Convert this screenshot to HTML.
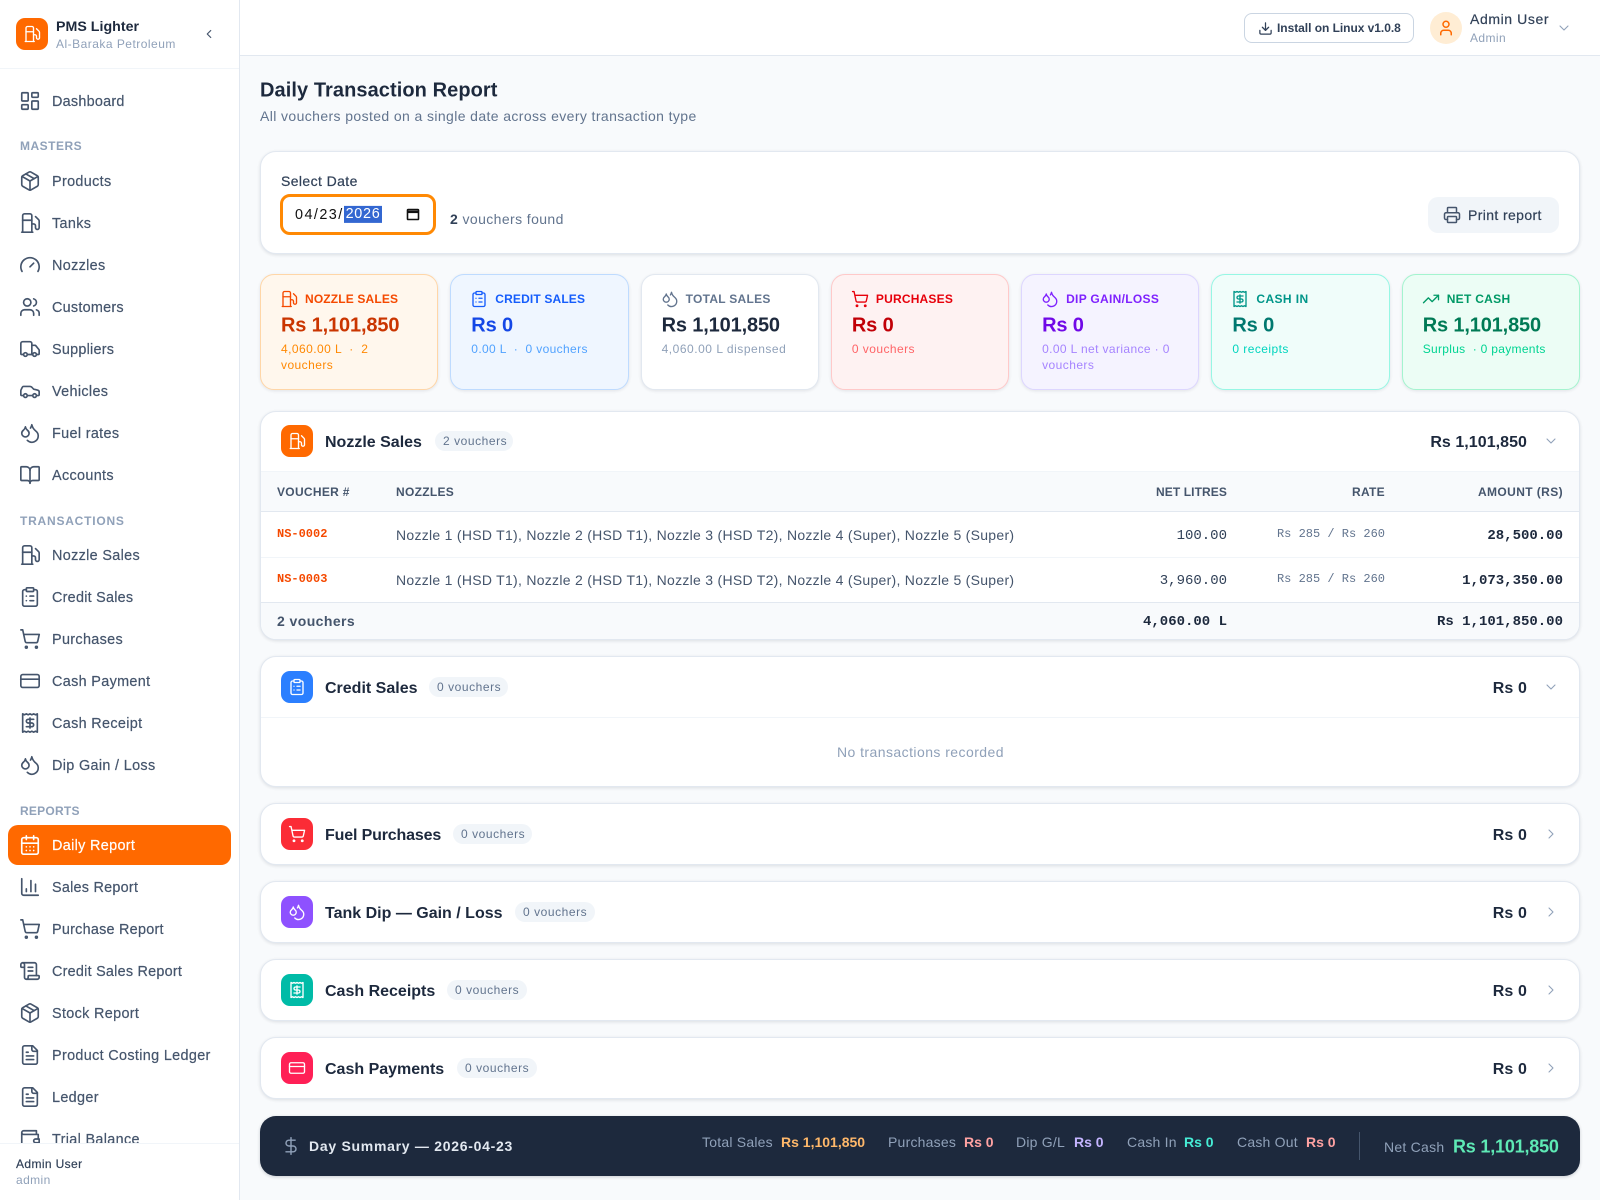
<!DOCTYPE html>
<html lang="en"><head><meta charset="utf-8"><title>Daily Transaction Report</title>
<style>
html,body{margin:0;padding:0}
body{position:relative;width:1600px;height:1200px;overflow:hidden;background:#f8fafc;font-family:"Liberation Sans",sans-serif;font-size:14px;letter-spacing:.34px;color:#1d293d}
.t{position:absolute;white-space:nowrap;transform:translateY(calc(-50% + 1.4px));line-height:1.2}
.i{position:absolute;fill:none;stroke:currentColor;stroke-width:2;stroke-linecap:round;stroke-linejoin:round;overflow:visible}
.box{position:absolute;box-sizing:border-box}
.card{position:absolute;box-sizing:border-box;left:260px;width:1320px;background:#fff;border:1px solid #e2e8f0;border-radius:16px;box-shadow:0 1px 3px rgba(15,23,43,.12)}
.m{font-family:"Liberation Mono",monospace;letter-spacing:0}
.md{-webkit-text-stroke:.2px}
.n{left:52px;color:#45556c;font-weight:400;font-size:14.4px;-webkit-text-stroke:.2px}
.ni{left:19px;width:22px;height:22px;margin-top:-2px;color:#45556c;stroke-width:1.8}
.g{left:20px;color:#90a1b9;font-size:12px;font-weight:700}
.st{position:absolute;box-sizing:border-box;top:274px;width:178.3px;height:116px;border:1px solid;border-radius:14px;box-shadow:0 1px 3px rgba(15,23,43,.1)}
.sl{left:44px;top:22.6px;font-size:12px;font-weight:700;letter-spacing:.3px}
.sv{left:20px;top:48.6px;font-size:20px;font-weight:700;letter-spacing:-.15px}
.ss{left:20px;top:72.6px;font-size:12px;letter-spacing:.44px}
.si{left:19px;top:15px;width:18px;height:18px;stroke-width:1.8}
.hi{position:absolute;left:281px;width:32px;height:32px;border-radius:9px;color:#fff}
.hi svg{left:7px;top:7px;width:18px;height:18px;stroke-width:1.8}
.ht{left:325px;font-size:16px;font-weight:700;color:#1d293d;letter-spacing:0}
.pill{position:absolute;box-sizing:border-box;height:20px;border-radius:10px;background:#f1f5f9;color:#62748e;font-size:12px;line-height:20px;padding:0 8px;white-space:nowrap;letter-spacing:.55px}
.tot{right:73px;font-size:16px;font-weight:700;color:#1d293d;letter-spacing:.12px}
.chev{left:1543px;width:16px;height:16px;color:#90a1b9;stroke-width:1.6}
.th{font-size:12px;font-weight:700;color:#45556c;top:491px;letter-spacing:.3px}
.ln{position:absolute;left:261px;width:1318px;height:1px}
.nz{left:396px;color:#45556c;font-size:14px;letter-spacing:.28px}
.sm{top:1140.5px;font-size:14px;color:#90a1b9;letter-spacing:.22px}
.sb{top:1140.5px;font-size:14px;font-weight:700;letter-spacing:0}
</style></head><body>
<svg width="0" height="0" style="position:absolute"><defs>
<symbol id="fuel" viewBox="0 0 24 24"><line x1="3" x2="15" y1="22" y2="22"/><line x1="4" x2="14" y1="9" y2="9"/><path d="M14 22V4a2 2 0 0 0-2-2H6a2 2 0 0 0-2 2v18"/><path d="M14 13h2a2 2 0 0 1 2 2v2a2 2 0 0 0 2 2a2 2 0 0 0 2-2V9.83a2 2 0 0 0-.59-1.42L18 5"/></symbol>
<symbol id="dash" viewBox="0 0 24 24"><rect width="7" height="9" x="3" y="3" rx="1"/><rect width="7" height="5" x="14" y="3" rx="1"/><rect width="7" height="9" x="14" y="12" rx="1"/><rect width="7" height="5" x="3" y="16" rx="1"/></symbol>
<symbol id="pkg" viewBox="0 0 24 24"><path d="m7.5 4.27 9 5.15"/><path d="M21 8a2 2 0 0 0-1-1.73l-7-4a2 2 0 0 0-2 0l-7 4A2 2 0 0 0 3 8v8a2 2 0 0 0 1 1.73l7 4a2 2 0 0 0 2 0l7-4A2 2 0 0 0 21 16Z"/><path d="m3.3 7 8.7 5 8.7-5"/><path d="M12 22V12"/></symbol>
<symbol id="gauge" viewBox="0 0 24 24"><path d="m12 14 4-4"/><path d="M3.34 19a10 10 0 1 1 17.32 0"/></symbol>
<symbol id="users" viewBox="0 0 24 24"><path d="M16 21v-2a4 4 0 0 0-4-4H6a4 4 0 0 0-4 4v2"/><circle cx="9" cy="7" r="4"/><path d="M22 21v-2a4 4 0 0 0-3-3.87"/><path d="M16 3.13a4 4 0 0 1 0 7.75"/></symbol>
<symbol id="truck" viewBox="0 0 24 24"><path d="M14 18V6a2 2 0 0 0-2-2H4a2 2 0 0 0-2 2v11a1 1 0 0 0 1 1h2"/><path d="M15 18H9"/><path d="M19 18h2a1 1 0 0 0 1-1v-3.65a1 1 0 0 0-.22-.624l-3.48-4.35A1 1 0 0 0 17.52 8H14"/><circle cx="17" cy="18" r="2"/><circle cx="7" cy="18" r="2"/></symbol>
<symbol id="car" viewBox="0 0 24 24"><path d="M19 17h2c.6 0 1-.4 1-1v-3c0-.9-.7-1.7-1.5-1.9C18.7 10.6 16 10 16 10s-1.3-1.4-2.2-2.3c-.5-.4-1.1-.7-1.8-.7H5c-.6 0-1.1.4-1.4.9l-1.4 2.9A3.7 3.7 0 0 0 2 12v4c0 .6.4 1 1 1h2"/><circle cx="7" cy="17" r="2"/><path d="M9 17h6"/><circle cx="17" cy="17" r="2"/></symbol>
<symbol id="drops" viewBox="0 0 24 24"><path d="M7 16.3c2.2 0 4-1.83 4-4.05 0-1.16-.57-2.26-1.71-3.19S7.29 6.75 7 5.3c-.29 1.45-1.14 2.84-2.29 3.76S3 11.1 3 12.25c0 2.22 1.8 4.05 4 4.05z"/><path d="M12.56 6.6A10.97 10.97 0 0 0 14 3.02c.5 2.5 2 4.9 4 6.5s3 3.5 3 5.5a6.98 6.98 0 0 1-11.91 4.97"/></symbol>
<symbol id="book" viewBox="0 0 24 24"><path d="M12 7v14"/><path d="M3 18a1 1 0 0 1-1-1V4a1 1 0 0 1 1-1h5a4 4 0 0 1 4 4 4 4 0 0 1 4-4h5a1 1 0 0 1 1 1v13a1 1 0 0 1-1 1h-6a3 3 0 0 0-3 3 3 3 0 0 0-3-3z"/></symbol>
<symbol id="clip" viewBox="0 0 24 24"><rect width="8" height="4" x="8" y="2" rx="1" ry="1"/><path d="M16 4h2a2 2 0 0 1 2 2v14a2 2 0 0 1-2 2H6a2 2 0 0 1-2-2V6a2 2 0 0 1 2-2h2"/><path d="M12 11h4"/><path d="M12 16h4"/><path d="M8 11h.01"/><path d="M8 16h.01"/></symbol>
<symbol id="cart" viewBox="0 0 24 24"><circle cx="8" cy="21" r="1"/><circle cx="19" cy="21" r="1"/><path d="M2.05 2.05h2l2.66 12.42a2 2 0 0 0 2 1.58h9.78a2 2 0 0 0 1.95-1.57l1.65-7.43H5.12"/></symbol>
<symbol id="cc" viewBox="0 0 24 24"><rect width="20" height="14" x="2" y="5" rx="2"/><line x1="2" x2="22" y1="10" y2="10"/></symbol>
<symbol id="rcpt" viewBox="0 0 24 24"><path d="M4 2v20l2-1 2 1 2-1 2 1 2-1 2 1 2-1 2 1V2l-2 1-2-1-2 1-2-1-2 1-2-1-2 1Z"/><path d="M16 8h-6a2 2 0 1 0 0 4h4a2 2 0 1 1 0 4H8"/><path d="M12 17.5v-11"/></symbol>
<symbol id="cal" viewBox="0 0 24 24"><path d="M8 2v4"/><path d="M16 2v4"/><rect width="18" height="18" x="3" y="4" rx="2"/><path d="M3 10h18"/><path d="M8 14h.01"/><path d="M12 14h.01"/><path d="M16 14h.01"/><path d="M8 18h.01"/><path d="M12 18h.01"/><path d="M16 18h.01"/></symbol>
<symbol id="chart" viewBox="0 0 24 24"><path d="M3 3v16a2 2 0 0 0 2 2h16"/><path d="M18 17V9"/><path d="M13 17V5"/><path d="M8 17v-3"/></symbol>
<symbol id="scroll" viewBox="0 0 24 24"><path d="M15 12h-5"/><path d="M15 8h-5"/><path d="M19 17V5a2 2 0 0 0-2-2H4"/><path d="M8 21h12a2 2 0 0 0 2-2v-1a1 1 0 0 0-1-1H11a1 1 0 0 0-1 1v1a2 2 0 1 1-4 0V5a2 2 0 1 0-4 0v2a1 1 0 0 0 1 1h3"/></symbol>
<symbol id="file" viewBox="0 0 24 24"><path d="M15 2H6a2 2 0 0 0-2 2v16a2 2 0 0 0 2 2h12a2 2 0 0 0 2-2V7Z"/><path d="M14 2v4a2 2 0 0 0 2 2h4"/><path d="M10 9H8"/><path d="M16 13H8"/><path d="M16 17H8"/></symbol>
<symbol id="wallet" viewBox="0 0 24 24"><path d="M21 12V7H5a2 2 0 0 1 0-4h14v4"/><path d="M3 5v14a2 2 0 0 0 2 2h16v-5"/><path d="M18 12a2 2 0 0 0 0 4h4v-4Z"/></symbol>
<symbol id="dl" viewBox="0 0 24 24"><path d="M21 15v4a2 2 0 0 1-2 2H5a2 2 0 0 1-2-2v-4"/><polyline points="7 10 12 15 17 10"/><line x1="12" x2="12" y1="15" y2="3"/></symbol>
<symbol id="user" viewBox="0 0 24 24"><path d="M19 21v-2a4 4 0 0 0-4-4H9a4 4 0 0 0-4 4v2"/><circle cx="12" cy="7" r="4"/></symbol>
<symbol id="print" viewBox="0 0 24 24"><path d="M6 18H4a2 2 0 0 1-2-2v-5a2 2 0 0 1 2-2h16a2 2 0 0 1 2 2v5a2 2 0 0 1-2 2h-2"/><path d="M6 9V3a1 1 0 0 1 1-1h10a1 1 0 0 1 1 1v6"/><rect x="6" y="14" width="12" height="8" rx="1"/></symbol>
<symbol id="trend" viewBox="0 0 24 24"><polyline points="22 7 13.5 15.5 8.5 10.5 2 17"/><polyline points="16 7 22 7 22 13"/></symbol>
<symbol id="dollar" viewBox="0 0 24 24"><line x1="12" x2="12" y1="2" y2="22"/><path d="M17 5H9.5a3.5 3.5 0 0 0 0 7h5a3.5 3.5 0 0 1 0 7H6"/></symbol>
<symbol id="cd" viewBox="0 0 24 24"><path d="m6 9 6 6 6-6"/></symbol>
<symbol id="cr" viewBox="0 0 24 24"><path d="m9 18 6-6-6-6"/></symbol>
<symbol id="cl" viewBox="0 0 24 24"><path d="m15 18-6-6 6-6"/></symbol>
</defs></svg>

<!-- Sidebar -->
<div class="box" style="left:0;top:0;width:240px;height:1200px;background:#fff;border-right:1px solid #e2e8f0;overflow:hidden">
 <div class="box" style="left:16px;top:18px;width:32px;height:32px;border-radius:9px;background:#ff6900;color:#fff"><svg class="i" style="left:7px;top:7px;width:18px;height:18px;stroke-width:1.8"><use href="#fuel"/></svg></div>
 <span class="t" style="left:56px;top:26.2px;font-weight:700;font-size:14.2px;color:#1d293d;letter-spacing:.03px">PMS Lighter</span>
 <span class="t" style="left:56px;top:42.6px;font-size:12px;color:#90a1b9;letter-spacing:.48px">Al-Baraka Petroleum</span>
 <svg class="i" style="left:202px;top:27px;width:14px;height:14px;color:#45556c"><use href="#cl"/></svg>
 <div class="box" style="left:0;top:68px;width:239px;height:1px;background:#f1f5f9"></div>
 <div class="box" style="left:0;top:0;width:239px;height:1143px;overflow:hidden">
 <svg class="i ni" style="top:92px"><use href="#dash"/></svg><span class="t n" style="top:101px;letter-spacing:.25px">Dashboard</span>
 <span class="t g" style="top:145.4px;letter-spacing:.5px">MASTERS</span>
 <svg class="i ni" style="top:172px"><use href="#pkg"/></svg><span class="t n" style="top:181px">Products</span>
 <svg class="i ni" style="top:214px"><use href="#fuel"/></svg><span class="t n" style="top:223px">Tanks</span>
 <svg class="i ni" style="top:256px"><use href="#gauge"/></svg><span class="t n" style="top:265px">Nozzles</span>
 <svg class="i ni" style="top:298px"><use href="#users"/></svg><span class="t n" style="top:307px;letter-spacing:.25px">Customers</span>
 <svg class="i ni" style="top:340px"><use href="#truck"/></svg><span class="t n" style="top:349px;letter-spacing:.25px">Suppliers</span>
 <svg class="i ni" style="top:382px"><use href="#car"/></svg><span class="t n" style="top:391px">Vehicles</span>
 <svg class="i ni" style="top:424px"><use href="#drops"/></svg><span class="t n" style="top:433px">Fuel rates</span>
 <svg class="i ni" style="top:466px"><use href="#book"/></svg><span class="t n" style="top:475px">Accounts</span>
 <span class="t g" style="top:519.7px;letter-spacing:.78px">TRANSACTIONS</span>
 <svg class="i ni" style="top:546px"><use href="#fuel"/></svg><span class="t n" style="top:555px">Nozzle Sales</span>
 <svg class="i ni" style="top:588px"><use href="#clip"/></svg><span class="t n" style="top:597px;letter-spacing:.25px">Credit Sales</span>
 <svg class="i ni" style="top:630px"><use href="#cart"/></svg><span class="t n" style="top:639px">Purchases</span>
 <svg class="i ni" style="top:672px"><use href="#cc"/></svg><span class="t n" style="top:681px">Cash Payment</span>
 <svg class="i ni" style="top:714px"><use href="#rcpt"/></svg><span class="t n" style="top:723px">Cash Receipt</span>
 <svg class="i ni" style="top:756px"><use href="#drops"/></svg><span class="t n" style="top:765px">Dip Gain / Loss</span>
 <span class="t g" style="top:809.7px;letter-spacing:.25px">REPORTS</span>
 <div class="box" style="left:8px;top:825px;width:223px;height:40px;border-radius:10px;background:#ff6900"></div>
 <svg class="i ni" style="top:836px;color:#fff"><use href="#cal"/></svg><span class="t n" style="top:845px;color:#fff">Daily Report</span>
 <svg class="i ni" style="top:878px"><use href="#chart"/></svg><span class="t n" style="top:887px;letter-spacing:.25px">Sales Report</span>
 <svg class="i ni" style="top:920px"><use href="#cart"/></svg><span class="t n" style="top:929px;letter-spacing:.25px">Purchase Report</span>
 <svg class="i ni" style="top:962px"><use href="#scroll"/></svg><span class="t n" style="top:971px;letter-spacing:.24px">Credit Sales Report</span>
 <svg class="i ni" style="top:1004px"><use href="#pkg"/></svg><span class="t n" style="top:1013px">Stock Report</span>
 <svg class="i ni" style="top:1046px"><use href="#file"/></svg><span class="t n" style="top:1055px">Product Costing Ledger</span>
 <svg class="i ni" style="top:1088px"><use href="#file"/></svg><span class="t n" style="top:1097px">Ledger</span>
 <svg class="i ni" style="top:1130px"><use href="#wallet"/></svg><span class="t n" style="top:1139px">Trial Balance</span>
 </div>
 <div class="box" style="left:0;top:1143px;width:239px;height:1px;background:#f1f5f9"></div>
 <span class="t md" style="left:16px;top:1163px;font-size:12px;color:#314158;letter-spacing:.38px">Admin User</span>
 <span class="t" style="left:16px;top:1179px;font-size:12px;color:#90a1b9;letter-spacing:.4px">admin</span>
</div>

<!-- Top bar -->
<div class="box" style="left:240px;top:0;width:1360px;height:56px;background:#fff;border-bottom:1px solid #e2e8f0"></div>
<div class="box" style="left:1244px;top:13px;width:170px;height:30px;border:1px solid #cad5e2;border-radius:8px;background:#fff"></div>
<svg class="i" style="left:1257.5px;top:20.5px;width:15px;height:15px;color:#314158"><use href="#dl"/></svg>
<span class="t" style="left:1277px;top:27px;font-size:12px;font-weight:700;color:#314158;letter-spacing:-.04px">Install on Linux v1.0.8</span>
<div class="box" style="left:1430px;top:12px;width:32px;height:32px;border-radius:50%;background:#ffedd4;color:#ff6900"><svg class="i" style="left:7px;top:7px;width:18px;height:18px"><use href="#user"/></svg></div>
<span class="t md" style="left:1470px;top:18.2px;font-size:14px;color:#314158;letter-spacing:.6px">Admin User</span>
<span class="t" style="left:1470px;top:36.7px;font-size:12px;color:#90a1b9;letter-spacing:.4px">Admin</span>
<svg class="i" style="left:1556px;top:20px;width:16px;height:16px;color:#90a1b9;stroke-width:1.6"><use href="#cd"/></svg>

<!-- Title -->
<span class="t" style="left:260px;top:88.8px;font-size:20px;font-weight:700;color:#1d293d;letter-spacing:.08px">Daily Transaction Report</span>
<span class="t" style="left:260px;top:115.4px;font-size:14px;color:#62748e;letter-spacing:.39px">All vouchers posted on a single date across every transaction type</span>

<!-- Filter card -->
<div class="card" style="top:151px;height:103px"></div>
<span class="t md" style="left:281px;top:180.4px;font-size:14px;color:#314158;letter-spacing:.4px">Select Date</span>
<div class="box" style="left:279.5px;top:193.5px;width:156px;height:41px;border:3px solid #ff8904;border-radius:10px;background:#fff"></div>
<span class="t" style="left:295px;top:213.6px;font-size:14.4px;color:#111;letter-spacing:1.45px">04/23/</span>
<span class="t" style="left:344px;top:212.7px;width:38px;height:17px;line-height:17px;background:#3367d1;color:#fff;font-size:14.4px;letter-spacing:.7px;text-align:center">2026</span>
<svg class="i" style="left:406px;top:207px;width:14px;height:14px;color:#111;stroke-width:1.6;stroke-linecap:butt;stroke-linejoin:miter" viewBox="0 0 14 14"><rect x="1.5" y="2.5" width="11" height="10" rx=".8"/><path d="M1.5 4.8h11" stroke-width="2.6"/></svg>
<span class="t" style="left:450px;top:217.6px;font-size:14px;color:#62748e;letter-spacing:.4px"><b style="color:#314158">2</b> vouchers found</span>
<div class="box" style="left:1428px;top:197px;width:131px;height:36px;border-radius:10px;background:#f1f5f9"></div>
<svg class="i" style="left:1443px;top:206px;width:18px;height:18px;color:#45556c"><use href="#print"/></svg>
<span class="t md" style="left:1468px;top:213.6px;font-size:14px;color:#314158;letter-spacing:.38px">Print report</span>

<!-- Stat cards -->
<div class="st" style="left:260px;background:#fff7ed;border-color:#ffd6a7">
 <svg class="i si" style="color:#f54900"><use href="#fuel"/></svg><span class="t sl" style="color:#f54900;letter-spacing:.15px">NOZZLE SALES</span>
 <span class="t sv" style="color:#ca3500">Rs 1,101,850</span>
 <span class="t ss" style="color:#ff8904">4,060.00 L &nbsp;·&nbsp; 2</span><span class="t ss" style="top:88.6px;color:#ff8904">vouchers</span>
</div>
<div class="st" style="left:450.3px;background:#eff6ff;border-color:#bedbff">
 <svg class="i si" style="color:#155dfc"><use href="#clip"/></svg><span class="t sl" style="color:#155dfc;letter-spacing:.15px">CREDIT SALES</span>
 <span class="t sv" style="color:#1447e6">Rs 0</span>
 <span class="t ss" style="color:#51a2ff;letter-spacing:.36px">0.00 L &nbsp;·&nbsp; 0 vouchers</span>
</div>
<div class="st" style="left:640.6px;background:#fff;border-color:#e2e8f0">
 <svg class="i si" style="color:#62748e"><use href="#drops"/></svg><span class="t sl" style="color:#62748e;letter-spacing:.28px">TOTAL SALES</span>
 <span class="t sv" style="color:#1d293d">Rs 1,101,850</span>
 <span class="t ss" style="color:#90a1b9;letter-spacing:.52px">4,060.00 L dispensed</span>
</div>
<div class="st" style="left:830.9px;background:#fef2f2;border-color:#ffc9c9">
 <svg class="i si" style="color:#e7000b"><use href="#cart"/></svg><span class="t sl" style="color:#e7000b;letter-spacing:.2px">PURCHASES</span>
 <span class="t sv" style="color:#c10007">Rs 0</span>
 <span class="t ss" style="color:#ff6467">0 vouchers</span>
</div>
<div class="st" style="left:1021.1px;background:#f5f3ff;border-color:#ddd6ff">
 <svg class="i si" style="color:#7f22fe"><use href="#drops"/></svg><span class="t sl" style="color:#7f22fe">DIP GAIN/LOSS</span>
 <span class="t sv" style="color:#7008e7">Rs 0</span>
 <span class="t ss" style="color:#a684ff;letter-spacing:.38px">0.00 L net variance · 0</span><span class="t ss" style="top:88.6px;color:#a684ff">vouchers</span>
</div>
<div class="st" style="left:1211.4px;background:#f0fdfa;border-color:#96f7e4">
 <svg class="i si" style="color:#009689"><use href="#rcpt"/></svg><span class="t sl" style="color:#009689;letter-spacing:.4px">CASH IN</span>
 <span class="t sv" style="color:#00786f">Rs 0</span>
 <span class="t ss" style="color:#00d5be">0 receipts</span>
</div>
<div class="st" style="left:1401.7px;background:#ecfdf5;border-color:#a4f4cf">
 <svg class="i si" style="color:#009966"><use href="#trend"/></svg><span class="t sl" style="color:#009966">NET CASH</span>
 <span class="t sv" style="color:#007a55">Rs 1,101,850</span>
 <span class="t ss" style="color:#00d492;letter-spacing:.3px">Surplus &nbsp;· 0 payments</span>
</div>

<!-- Nozzle Sales -->
<div class="card" style="top:411px;height:229px"></div>
<div class="hi" style="top:425px;background:#ff6900"><svg class="i"><use href="#fuel"/></svg></div>
<span class="t ht" style="top:441px">Nozzle Sales</span>
<div class="pill" style="left:435px;top:431px;width:78px">2 vouchers</div>
<span class="t tot" style="top:441px;letter-spacing:.05px">Rs 1,101,850</span>
<svg class="i chev" style="top:433px"><use href="#cd"/></svg>
<div class="box" style="left:261px;top:471px;width:1318px;height:41px;background:#f8fafc;border-top:1px solid #f1f5f9;border-bottom:1px solid #e2e8f0"></div>
<span class="t th" style="left:277px">VOUCHER #</span>
<span class="t th" style="left:396px">NOZZLES</span>
<span class="t th" style="right:373px;letter-spacing:.1px">NET LITRES</span>
<span class="t th" style="right:215px">RATE</span>
<span class="t th" style="right:37px;letter-spacing:.4px">AMOUNT (RS)</span>
<span class="t m" style="left:277px;top:533.4px;font-size:12px;font-weight:700;color:#f54900">NS-0002</span>
<span class="t nz" style="top:534px">Nozzle 1 (HSD T1), Nozzle 2 (HSD T1), Nozzle 3 (HSD T2), Nozzle 4 (Super), Nozzle 5 (Super)</span>
<span class="t m" style="right:373px;top:534.6px;color:#314158">100.00</span>
<span class="t m" style="right:215px;top:533.4px;font-size:12px;color:#62748e">Rs 285 / Rs 260</span>
<span class="t m" style="right:37px;top:534.6px;font-weight:700;color:#1d293d">28,500.00</span>
<div class="ln" style="top:557px;background:#f1f5f9"></div>
<span class="t m" style="left:277px;top:578.4px;font-size:12px;font-weight:700;color:#f54900">NS-0003</span>
<span class="t nz" style="top:579px">Nozzle 1 (HSD T1), Nozzle 2 (HSD T1), Nozzle 3 (HSD T2), Nozzle 4 (Super), Nozzle 5 (Super)</span>
<span class="t m" style="right:373px;top:579.6px;color:#314158">3,960.00</span>
<span class="t m" style="right:215px;top:578.4px;font-size:12px;color:#62748e">Rs 285 / Rs 260</span>
<span class="t m" style="right:37px;top:579.6px;font-weight:700;color:#1d293d">1,073,350.00</span>
<div class="box" style="left:261px;top:602px;width:1318px;height:37px;background:#f8fafc;border-top:1px solid #e2e8f0;border-radius:0 0 15px 15px"></div>
<span class="t" style="left:277px;top:620px;font-weight:700;color:#45556c;letter-spacing:.42px">2 vouchers</span>
<span class="t m" style="right:373px;top:621px;font-weight:700;color:#1d293d">4,060.00 L</span>
<span class="t m" style="right:37px;top:621px;font-weight:700;color:#1d293d">Rs 1,101,850.00</span>

<!-- Credit Sales -->
<div class="card" style="top:656px;height:131px"></div>
<div class="hi" style="top:671px;background:#2b7fff"><svg class="i"><use href="#clip"/></svg></div>
<span class="t ht" style="top:687px">Credit Sales</span>
<div class="pill" style="left:429px;top:677px;width:79px">0 vouchers</div>
<span class="t tot" style="top:687px">Rs 0</span>
<svg class="i chev" style="top:679px"><use href="#cd"/></svg>
<div class="ln" style="top:717px;background:#f1f5f9"></div>
<span class="t" style="left:837px;top:751.4px;color:#90a1b9;font-size:14px;letter-spacing:.44px">No transactions recorded</span>

<!-- Collapsed sections -->
<div class="card" style="top:803px;height:62px"></div>
<div class="hi" style="top:818px;background:#fb2c36"><svg class="i"><use href="#cart"/></svg></div>
<span class="t ht" style="top:834px;letter-spacing:-.15px">Fuel Purchases</span>
<div class="pill" style="left:453px;top:824px;width:79px">0 vouchers</div>
<span class="t tot" style="top:834px">Rs 0</span>
<svg class="i chev" style="top:826px"><use href="#cr"/></svg>

<div class="card" style="top:881px;height:62px"></div>
<div class="hi" style="top:896px;background:#8e51ff"><svg class="i"><use href="#drops"/></svg></div>
<span class="t ht" style="top:912px">Tank Dip — Gain / Loss</span>
<div class="pill" style="left:515px;top:902px;width:80px">0 vouchers</div>
<span class="t tot" style="top:912px">Rs 0</span>
<svg class="i chev" style="top:904px"><use href="#cr"/></svg>

<div class="card" style="top:959px;height:62px"></div>
<div class="hi" style="top:974px;background:#00bba7"><svg class="i"><use href="#rcpt"/></svg></div>
<span class="t ht" style="top:990px">Cash Receipts</span>
<div class="pill" style="left:447px;top:980px;width:80px">0 vouchers</div>
<span class="t tot" style="top:990px">Rs 0</span>
<svg class="i chev" style="top:982px"><use href="#cr"/></svg>

<div class="card" style="top:1037px;height:62px"></div>
<div class="hi" style="top:1052px;background:#ff2056"><svg class="i"><use href="#cc"/></svg></div>
<span class="t ht" style="top:1068px">Cash Payments</span>
<div class="pill" style="left:457px;top:1058px;width:80px">0 vouchers</div>
<span class="t tot" style="top:1068px">Rs 0</span>
<svg class="i chev" style="top:1060px"><use href="#cr"/></svg>

<!-- Summary bar -->
<div class="box" style="left:260px;top:1116px;width:1320px;height:60px;border-radius:16px;background:#1d293d;box-shadow:0 1px 3px rgba(15,23,43,.2)"></div>
<svg class="i" style="left:281px;top:1136px;width:20px;height:20px;color:#90a1b9;stroke-width:1.7"><use href="#dollar"/></svg>
<span class="t" style="left:309px;top:1144.8px;font-size:14px;font-weight:700;color:#e2e8f0;letter-spacing:.72px">Day Summary — 2026-04-23</span>
<span class="t sm" style="left:702px">Total Sales</span><span class="t sb" style="left:781px;color:#ffb86a">Rs 1,101,850</span>
<span class="t sm" style="left:888px">Purchases</span><span class="t sb" style="left:964px;color:#ffa2a2">Rs 0</span>
<span class="t sm" style="left:1016px">Dip G/L</span><span class="t sb" style="left:1074px;color:#c4b4ff">Rs 0</span>
<span class="t sm" style="left:1127px">Cash In</span><span class="t sb" style="left:1184px;color:#46ecd5">Rs 0</span>
<span class="t sm" style="left:1237px">Cash Out</span><span class="t sb" style="left:1306px;color:#ffa2a2">Rs 0</span>
<div class="box" style="left:1359px;top:1132px;width:1px;height:28px;background:#45556c"></div>
<span class="t" style="left:1384px;top:1146px;font-size:14px;color:#90a1b9;letter-spacing:.25px">Net Cash</span>
<span class="t" style="left:1453px;top:1145.6px;font-size:18px;font-weight:700;color:#5ee9b5;letter-spacing:-.2px">Rs 1,101,850</span>
</body></html>
